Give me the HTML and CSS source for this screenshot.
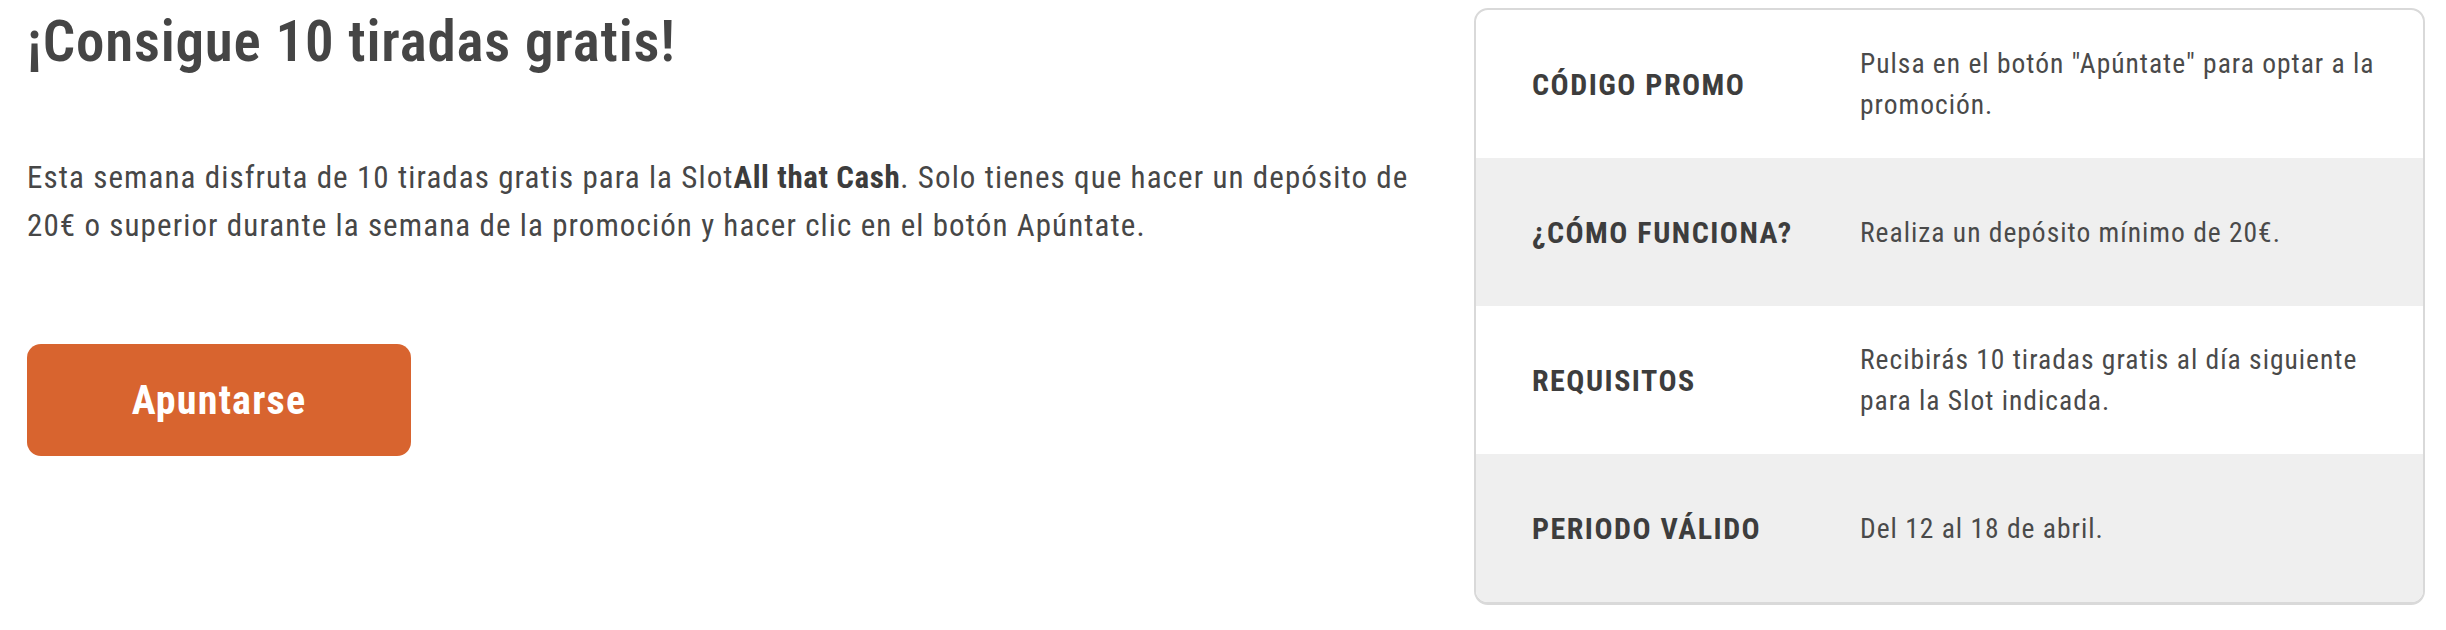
FILE: index.html
```html
<!DOCTYPE html>
<html lang="es">
<head>
  <meta charset="UTF-8">
  <meta name="viewport" content="width=device-width, initial-scale=1.0">
  <title>¡Consigue 10 tiradas gratis!</title>
  <link rel="stylesheet" href="styles.css">
</head>
<body>
  <main class="promo">
    <!-- Descripción de la promoción -->
    <section class="promo-info">
      <h1>¡Consigue 10 tiradas gratis!</h1>
      <p>Esta semana disfruta de 10 tiradas gratis para la Slot<strong>All that Cash</strong>. Solo tienes que hacer un depósito de 20€ o superior durante la semana de la promoción y hacer clic en el botón Apúntate.</p>
      <button class="btn-join" type="button">Apuntarse</button>
    </section>

    <!-- Tabla de condiciones -->
    <aside class="promo-card">
      <div class="row">
        <div class="label">CÓDIGO PROMO</div>
        <div class="value">Pulsa en el botón "Apúntate" para optar a la promoción.</div>
      </div>
      <div class="row">
        <div class="label">¿CÓMO FUNCIONA?</div>
        <div class="value">Realiza un depósito mínimo de 20€.</div>
      </div>
      <div class="row">
        <div class="label">REQUISITOS</div>
        <div class="value">Recibirás 10 tiradas gratis al día siguiente para la Slot indicada.</div>
      </div>
      <div class="row">
        <div class="label">PERIODO VÁLIDO</div>
        <div class="value">Del 12 al 18 de abril.</div>
      </div>
    </aside>
  </main>
</body>
</html>
```
FILE: styles.css
```css
* {
  margin: 0;
  padding: 0;
  box-sizing: border-box;
}

body {
  font-family: Roboto, "Open Sans", sans-serif;
  font-stretch: condensed;
  color: #444;
  background-color: #ffffff;
}

.promo {
  display: flex;
  align-items: flex-start;
  gap: 40px;
  padding: 8px 21px 0 27px;
}

.promo-info {
  flex: 1;
}

.promo-info h1 {
  font-size: 57px;
  font-weight: 600;
  line-height: 67px;
  letter-spacing: 0.8px;
  color: #454545;
}

.promo-info p {
  margin-top: 79px;
  font-size: 31px;
  line-height: 48px;
  letter-spacing: 1.1px;
  color: #474747;
}

.promo-info strong {
  font-weight: 700;
  letter-spacing: 0.6px;
  color: #3c3c3c;
}

.btn-join {
  display: block;
  width: 384px;
  height: 112px;
  margin-top: 94px;
  background-color: #d8642f;
  color: #ffffff;
  border: none;
  border-radius: 14px;
  font-family: inherit;
  font-stretch: condensed;
  font-size: 40px;
  font-weight: 700;
  letter-spacing: 1.2px;
  cursor: pointer;
}

.btn-join:hover {
  background-color: #c75628;
}

/* Tarjeta de condiciones */
.promo-card {
  width: 951px;
  border: 2px solid #d9d9d9;
  border-bottom-width: 3px;
  border-radius: 14px;
  overflow: hidden;
}

.row {
  display: grid;
  grid-template-columns: 384px 1fr;
  align-items: center;
  min-height: 148px;
}

.row:nth-child(even) {
  background-color: #efefef;
}

.label {
  padding-left: 56px;
  font-size: 30px;
  font-weight: 700;
  letter-spacing: 1.5px;
  color: #3d3d3d;
}

.value {
  padding-right: 30px;
  font-size: 27.5px;
  line-height: 41px;
  letter-spacing: 1px;
  color: #4a4a4a;
}
```
